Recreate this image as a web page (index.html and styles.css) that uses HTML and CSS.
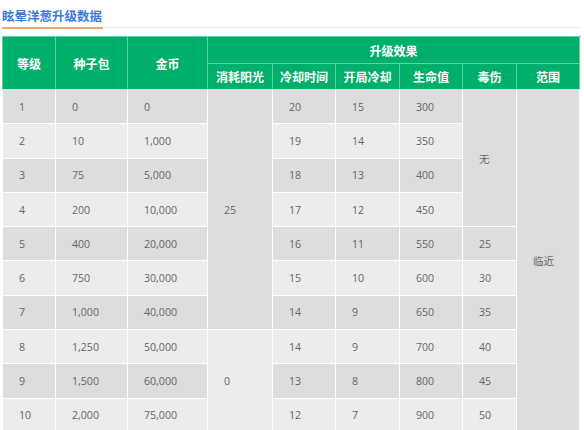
FILE: index.html
```html
<!DOCTYPE html>
<html lang="zh">
<head>
<meta charset="utf-8">
<title>眩晕洋葱升级数据</title>
<link rel="stylesheet" href="styles.css">
</head>
<body>
<div class="page">
  <div class="title-bar"><h2 class="title">眩晕洋葱升级数据</h2></div>
  <table class="data">
    <colgroup>
      <col class="c1"><col class="c2"><col class="c3"><col class="c4"><col class="c5"><col class="c6"><col class="c7"><col class="c8"><col class="c9">
    </colgroup>
    <thead>
      <tr class="h1">
        <th rowspan="2">等级</th>
        <th rowspan="2">种子包</th>
        <th rowspan="2">金币</th>
        <th colspan="7">升级效果</th>
      </tr>
      <tr class="h2">
        <th>消耗阳光</th>
        <th>冷却时间</th>
        <th>开局冷却</th>
        <th>生命值</th>
        <th>毒伤</th>
        <th>范围</th>
      </tr>
    </thead>
    <tbody>
      <tr class="odd"><td>1</td><td>0</td><td>0</td><td rowspan="7" class="bg-odd">25</td><td>20</td><td>15</td><td>300</td><td rowspan="4" class="bg-odd">无</td><td rowspan="10" class="bg-odd">临近</td></tr>
      <tr class="even"><td>2</td><td>10</td><td>1,000</td><td>19</td><td>14</td><td>350</td></tr>
      <tr class="odd"><td>3</td><td>75</td><td>5,000</td><td>18</td><td>13</td><td>400</td></tr>
      <tr class="even"><td>4</td><td>200</td><td>10,000</td><td>17</td><td>12</td><td>450</td></tr>
      <tr class="odd"><td>5</td><td>400</td><td>20,000</td><td>16</td><td>11</td><td>550</td><td>25</td></tr>
      <tr class="even"><td>6</td><td>750</td><td>30,000</td><td>15</td><td>10</td><td>600</td><td>30</td></tr>
      <tr class="odd"><td>7</td><td>1,000</td><td>40,000</td><td>14</td><td>9</td><td>650</td><td>35</td></tr>
      <tr class="even"><td>8</td><td>1,250</td><td>50,000</td><td rowspan="3" class="bg-even">0</td><td>14</td><td>9</td><td>700</td><td>40</td></tr>
      <tr class="odd"><td>9</td><td>1,500</td><td>60,000</td><td>13</td><td>8</td><td>800</td><td>45</td></tr>
      <tr class="even"><td>10</td><td>2,000</td><td>75,000</td><td>12</td><td>7</td><td>900</td><td>50</td></tr>
    </tbody>
  </table>
</div>
</body>
</html>
```
FILE: styles.css
```css
html, body {
  margin: 0;
  padding: 0;
  background: #ffffff;
}

.page {
  padding: 4px 4px 0 2px;
  font-family: "Open Sans", "Noto Sans CJK SC", sans-serif;
}

.title-bar {
  border-bottom: 1px solid #ececec;
  height: 23px;
}

.title {
  display: inline-block;
  margin: 0;
  font-family: "Noto Sans CJK SC", sans-serif;
  font-size: 12.5px;
  line-height: 20px;
  height: 21px;
  font-weight: 700;
  color: #3c7bd6;
  border-bottom: 2px solid #f2a66f;
  padding-right: 1px;
}

.data {
  margin-top: 8px;
  width: 577px;
  table-layout: fixed;
  border-collapse: collapse;
}

.c1 { width: 53px; }
.c2 { width: 72px; }
.c3 { width: 80px; }
.c4 { width: 65px; }
.c5 { width: 63px; }
.c6 { width: 64px; }
.c7 { width: 63px; }
.c8 { width: 54px; }
.c9 { width: 63px; }

.data th {
  background: #00b06a;
  color: #ffffff;
  font-family: "Noto Sans CJK SC", sans-serif;
  font-size: 12px;
  font-weight: 700;
  text-align: center;
  padding: 0;
  border: 1px solid #5fd3a0;
}

.h1 { height: 27px; }
.h2 { height: 26px; }

.data thead tr.h2 th,
.data thead tr.h1 th[rowspan] {
  border-bottom: 1px solid #b5f0d6;
}

.data td {
  border: 1px solid #ffffff;
  padding: 0 0 0 16px;
  font-size: 10.6px;
  color: #666666;
  text-align: left;
  vertical-align: middle;
  font-family: "Open Sans", "Noto Sans CJK SC", sans-serif;
}

.data tbody tr { height: 34.3px; }

.odd td { background: #dddddd; }
.even td { background: #ececec; }
.data td.bg-odd { background: #dddddd; }
.data td.bg-even { background: #ececec; }
```
